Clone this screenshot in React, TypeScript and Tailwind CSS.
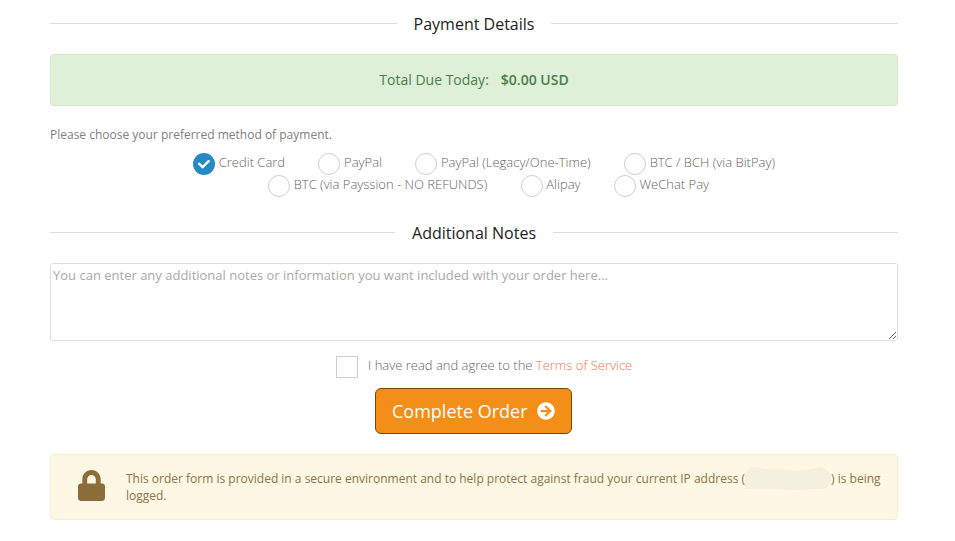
import { useState } from 'react';
import { FaArrowCircleRight, FaLock } from 'react-icons/fa';

interface PaymentMethod {
  id: string;
  label: string;
}

const methodRows: PaymentMethod[][] = [
  [
    { id: 'card', label: 'Credit Card' },
    { id: 'paypal', label: 'PayPal' },
    { id: 'paypal-legacy', label: 'PayPal (Legacy/One-Time)' },
    { id: 'bitpay', label: 'BTC / BCH (via BitPay)' },
  ],
  [
    { id: 'payssion', label: 'BTC (via Payssion - NO REFUNDS)' },
    { id: 'alipay', label: 'Alipay' },
    { id: 'wechat', label: 'WeChat Pay' },
  ],
];

const SectionHeading = ({ children }: { children: string }) => (
  <div className="flex h-6 items-center">
    <div className="h-px flex-1 bg-[#dddddd]" />
    <h2 className="px-[17px] pt-px text-base leading-6 text-[#222222]">{children}</h2>
    <div className="h-px flex-1 bg-[#dddddd]" />
  </div>
);

interface MethodOptionProps {
  method: PaymentMethod;
  checked: boolean;
  onSelect: () => void;
}

const MethodOption = ({ method, checked, onSelect }: MethodOptionProps) => (
  <label className="flex h-[22px] cursor-pointer whitespace-nowrap">
    <input type="radio" name="method" className="sr-only" checked={checked} onChange={onSelect} />
    {checked ? (
      <span className="flex size-[22px] items-center justify-center rounded-full bg-[#2489c5]">
        <svg viewBox="0 0 22 22" className="size-[22px]" fill="none" stroke="white" strokeWidth="2.4">
          <path d="M6.2 10.8 L9.7 14 L15.6 8.2" strokeLinecap="round" />
        </svg>
      </span>
    ) : (
      <span className="size-[22px] rounded-full border border-[#d2cfc8] bg-white" />
    )}
    <span className="mr-[0.3px] ml-[3.7px] text-[13px] leading-[19px] font-light text-[#666666]">{method.label}</span>
  </label>
);

export default function App() {
  const [selected, setSelected] = useState('card');
  const [agreed, setAgreed] = useState(false);
  const [notes, setNotes] = useState('');

  return (
    <div className="h-[541px] w-[955px] overflow-hidden bg-white pt-[11px] pr-[57px] pl-[50px] font-['Open_Sans',sans-serif] text-[#666666]">
      <SectionHeading>Payment Details</SectionHeading>

      {/* Total */}
      <div className="mt-[19px] flex h-[52px] items-center justify-center rounded-[4px] border border-[#d6e9c6] bg-[#dff0d8] text-sm text-[#4a7d4b]">
        <span>Total Due Today:</span>
        <strong className="ml-3 font-semibold">$0.00 USD</strong>
      </div>

      <p className="mt-5 text-xs leading-[18px] text-[#808080]">
        Please choose your preferred method of payment.
      </p>

      {/* Payment methods */}
      <div className="mt-[9px]">
        <div className="flex gap-[33px] pl-[143px]">
          {methodRows[0].map((m) => (
            <MethodOption key={m.id} method={m} checked={selected === m.id} onSelect={() => setSelected(m.id)} />
          ))}
        </div>
        <div className="flex gap-[33px] pl-[218px]">
          {methodRows[1].map((m) => (
            <MethodOption key={m.id} method={m} checked={selected === m.id} onSelect={() => setSelected(m.id)} />
          ))}
        </div>
      </div>

      <div className="mt-[23px]">
        <SectionHeading>Additional Notes</SectionHeading>
      </div>

      <textarea
        className="mt-[19px] block h-[78px] w-full resize rounded-[3px] border border-[#dddddd] bg-white p-[2px] text-[13px] leading-[18px] placeholder:text-[#a9a9a9] focus:outline-none"
        placeholder="You can enter any additional notes or information you want included with your order here..."
        value={notes}
        onChange={(e) => setNotes(e.target.value)}
      />

      {/* Terms */}
      <label className="mt-[15px] ml-[286px] flex h-[22px] w-fit cursor-pointer">
        <input
          type="checkbox"
          className="size-[22px] appearance-none border border-[#d2cfc8] bg-white checked:bg-[#2489c5]"
          checked={agreed}
          onChange={(e) => setAgreed(e.target.checked)}
        />
        <span className="ml-2.5 text-[13px] leading-[19px] font-light whitespace-nowrap">
          I have read and agree to the <a className="text-[#f4764f]">Terms of Service</a>
        </span>
      </label>

      <button
        type="button"
        className="mt-2.5 ml-[325px] flex h-[46px] w-[197px] items-center rounded-[6px] border border-[#7a4608] bg-[#f38e19] pl-4 text-lg text-white"
      >
        <span>Complete Order</span>
        <FaArrowCircleRight className="ml-[9.5px] size-[18px]" />
      </button>

      {/* Security notice */}
      <div className="mt-5 flex h-[66px] rounded-[4px] border border-[#faebcc] bg-[#fcf8e3] text-[#8a6d3b]">
        <FaLock className="mt-[15px] ml-[27px] h-[31px] w-[27px] shrink-0" />
        <p className="mt-[15px] ml-[21px] text-xs leading-[17px] whitespace-nowrap text-[#8e7249]">
          This order form is provided in a secure environment and to help protect against fraud your current IP address (
          <svg viewBox="0 0 86 23" className="relative -top-px -my-1 inline-block h-[23px] w-[86px] align-middle" fill="#f4f0df">
            <path d="M0 7Q3 1 9 0Q14 0 18 2H36Q48 5 60 3Q67 2 72 1Q78-1 82 3Q86 6 86 11Q86 18 81 21Q77 22 68 22Q60 23 48 23Q38 23 35 22H0Z" />
          </svg>
          ) is being
          <br />
          logged.
        </p>
      </div>
    </div>
  );
}
